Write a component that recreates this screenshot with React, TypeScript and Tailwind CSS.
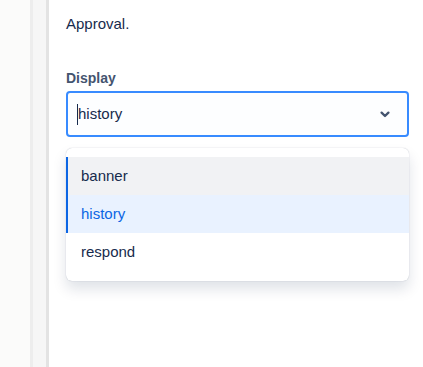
import React from "react";

export default function App() {
  const font = { fontFamily: '"Liberation Sans", Arial, sans-serif' };
  return (
    <div className="flex h-[367px] w-[423px] overflow-hidden bg-white" style={font}>
      <div className="w-[30px] shrink-0 bg-[#fbfbfa]" />
      <div className="w-[3px] shrink-0 bg-[#ededed]" />
      <div className="w-[13px] shrink-0 bg-[#f6f6f6]" />
      <div className="w-[3px] shrink-0 bg-[#e3e3e3]" />
      <div className="flex-1 flex flex-col bg-white pl-[17px] pr-[14px]">
        <p className="mt-[14px] text-[15px] leading-[20px] text-[#172b4d]">Approval.</p>
        <label className="mt-[36px] text-[14px] leading-[16px] font-bold text-[#44546f]">Display</label>
        <div className="mt-[5px] flex h-[46px] items-center rounded-[4px] border-2 border-[#388bff] bg-[#fdfeff] pl-[9px] pr-[17px]">
          <span className="h-[21px] w-px bg-[#172b4d]" />
          <span className="flex-1 text-[15px] text-[#172b4d]">history</span>
          <svg width="10" height="7" viewBox="0 0 10 7" fill="none">
            <path d="M1.6 1.6 L5 5 L8.4 1.6" stroke="#44546f" strokeWidth="2.3" strokeLinecap="round" strokeLinejoin="round" />
          </svg>
        </div>
        <div className="mt-[11px] rounded-[6px] bg-white pt-[9px] pb-[10px] shadow-[0_0_1px_rgba(9,30,66,0.31),0_8px_14px_rgba(9,30,66,0.13)]">
          <div className="flex h-[38px] items-center border-l-2 border-[#0c66e4] bg-[#f1f2f4] pl-[13px] text-[15px] text-[#172b4d]">
            banner
          </div>
          <div className="flex h-[38px] items-center border-l-2 border-[#0c66e4] bg-[#e9f2ff] pl-[13px] text-[15px] text-[#0c66e4]">
            history
          </div>
          <div className="flex h-[38px] items-center border-l-2 border-transparent pl-[13px] text-[15px] text-[#172b4d]">
            respond
          </div>
        </div>
      </div>
    </div>
  );
}
